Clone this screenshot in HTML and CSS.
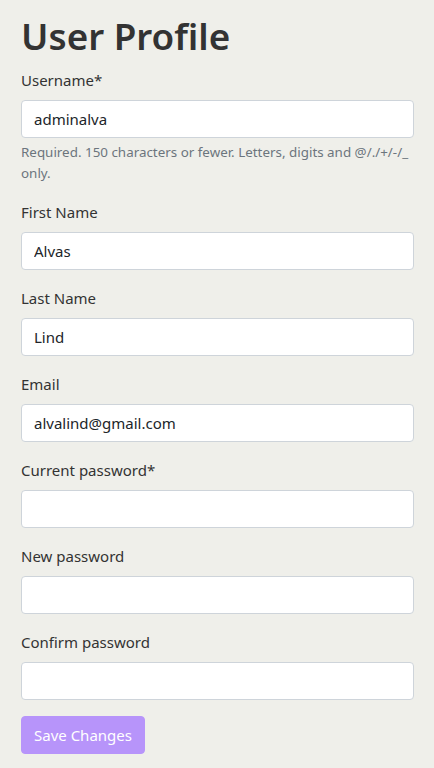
FILE: index.html
```html
<!DOCTYPE html>
<html lang="en">
<head>
<meta charset="utf-8">
<title>User Profile</title>
<link rel="stylesheet" href="styles.css">
</head>
<body>
<main class="page">
  <h1 class="title">User Profile</h1>
  <form class="form">
    <div class="group">
      <label class="label" for="username">Username*</label>
      <input class="input" id="username" type="text" value="adminalva">
      <div class="help">Required. 150 characters or fewer. Letters, digits and @/./+/-/_ only.</div>
    </div>
    <div class="group">
      <label class="label" for="first">First Name</label>
      <input class="input" id="first" type="text" value="Alvas">
    </div>
    <div class="group">
      <label class="label" for="last">Last Name</label>
      <input class="input" id="last" type="text" value="Lind">
    </div>
    <div class="group">
      <label class="label" for="email">Email</label>
      <input class="input" id="email" type="email" value="alvalind@gmail.com">
    </div>
    <div class="group">
      <label class="label" for="cur">Current password*</label>
      <input class="input" id="cur" type="password">
    </div>
    <div class="group">
      <label class="label" for="new">New password</label>
      <input class="input" id="new" type="password">
    </div>
    <div class="group">
      <label class="label" for="conf">Confirm password</label>
      <input class="input" id="conf" type="password">
    </div>
    <button class="btn" type="button">Save Changes</button>
  </form>
</main>
</body>
</html>
```

FILE: styles.css
```css
* { box-sizing: border-box; }
html, body { margin: 0; padding: 0; }
body {
  background: #efefea;
  font-family: "Noto Sans", "Open Sans", sans-serif;
  font-size: 15px;
  line-height: 24px;
  color: #333333;
}
.page {
  padding: 12px 20px 20px 21px;
}
.title {
  margin: 0 0 8px 0;
  font-size: 36.8px;
  line-height: 48px;
  font-weight: 600;
  color: #333333;
}
.form { display: flex; flex-direction: column; }
.group { margin-bottom: 16px; display: flex; flex-direction: column; }
.label {
  display: block;
  margin-bottom: 8px;
  font-size: 15px;
  line-height: 24px;
  color: #333333;
}
.input {
  display: block;
  width: 100%;
  height: 38px;
  padding: 6px 12px;
  font-family: inherit;
  font-size: 15px;
  line-height: 24px;
  color: #212529;
  background: #ffffff;
  border: 1px solid #ced4da;
  border-radius: 4px;
  outline: none;
}
.help {
  margin-top: 4px;
  font-size: 13.4px;
  line-height: 21px;
  color: #6c757d;
}
.btn {
  align-self: flex-start;
  height: 38px;
  padding: 6px 12px;
  font-family: inherit;
  font-size: 15px;
  line-height: 24px;
  color: #ffffff;
  background: #b794fa;
  border: 1px solid #b794fa;
  border-radius: 4px;
}
```
